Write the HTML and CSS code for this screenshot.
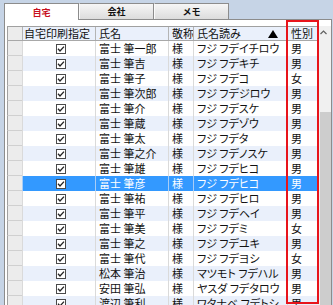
FILE: index.html
```html
<!DOCTYPE html>
<html lang="ja">
<head>
  <meta charset="UTF-8" />
  <title>宛名一覧</title>
  <link rel="stylesheet" href="styles.css">
</head>
<body>
  <svg class="defs" width="0" height="0">
    <symbol id="chk" viewBox="0 0 10 10">
      <rect x="0.5" y="0.5" width="9" height="9" fill="#fff" stroke="#4a4a4a" />
      <polyline points="2,4.8 4,7 8,2.6" fill="none" stroke="#222" stroke-width="1.3" />
    </symbol>
  </svg>

  <div class="tabs">
    <div class="tab active">自宅</div>
    <div class="tab">会社</div>
    <div class="tab">メモ</div>
  </div>

  <div class="panel">
    <div class="grid-wrap">
      <div class="grid">
        <div class="row head">
          <div class="rh"></div>
          <div class="cell first">自宅印刷指定</div>
          <div class="cell">氏名</div>
          <div class="cell">敬称</div>
          <div class="cell sort">氏名読み
            <svg width="10" height="8" viewBox="0 0 10 8"><polygon points="5,0 10,8 0,8" fill="#000" /></svg>
          </div>
          <div class="cell">性別</div>
        </div>

        <div class="row"><div class="rh"></div><div class="cell check"><svg><use href="#chk" /></svg></div><div class="cell">富士 筆一郎</div><div class="cell">様</div><div class="cell kana">フジ フデイチロウ</div><div class="cell">男</div></div>
        <div class="row"><div class="rh"></div><div class="cell check"><svg><use href="#chk" /></svg></div><div class="cell">富士 筆吉</div><div class="cell">様</div><div class="cell kana">フジ フデキチ</div><div class="cell">男</div></div>
        <div class="row"><div class="rh"></div><div class="cell check"><svg><use href="#chk" /></svg></div><div class="cell">富士 筆子</div><div class="cell">様</div><div class="cell kana">フジ フデコ</div><div class="cell">女</div></div>
        <div class="row"><div class="rh"></div><div class="cell check"><svg><use href="#chk" /></svg></div><div class="cell">富士 筆次郎</div><div class="cell">様</div><div class="cell kana">フジ フデジロウ</div><div class="cell">男</div></div>
        <div class="row"><div class="rh"></div><div class="cell check"><svg><use href="#chk" /></svg></div><div class="cell">富士 筆介</div><div class="cell">様</div><div class="cell kana">フジ フデスケ</div><div class="cell">男</div></div>
        <div class="row"><div class="rh"></div><div class="cell check"><svg><use href="#chk" /></svg></div><div class="cell">富士 筆蔵</div><div class="cell">様</div><div class="cell kana">フジ フデゾウ</div><div class="cell">男</div></div>
        <div class="row"><div class="rh"></div><div class="cell check"><svg><use href="#chk" /></svg></div><div class="cell">富士 筆太</div><div class="cell">様</div><div class="cell kana">フジ フデタ</div><div class="cell">男</div></div>
        <div class="row"><div class="rh"></div><div class="cell check"><svg><use href="#chk" /></svg></div><div class="cell">富士 筆之介</div><div class="cell">様</div><div class="cell kana">フジ フデノスケ</div><div class="cell">男</div></div>
        <div class="row"><div class="rh"></div><div class="cell check"><svg><use href="#chk" /></svg></div><div class="cell">富士 筆雄</div><div class="cell">様</div><div class="cell kana">フジ フデヒコ</div><div class="cell">男</div></div>
        <div class="row sel"><div class="rh"></div><div class="cell check"><svg><use href="#chk" /></svg></div><div class="cell">富士 筆彦</div><div class="cell">様</div><div class="cell kana">フジ フデヒコ</div><div class="cell">男</div></div>
        <div class="row"><div class="rh"></div><div class="cell check"><svg><use href="#chk" /></svg></div><div class="cell">富士 筆祐</div><div class="cell">様</div><div class="cell kana">フジ フデヒロ</div><div class="cell">男</div></div>
        <div class="row"><div class="rh"></div><div class="cell check"><svg><use href="#chk" /></svg></div><div class="cell">富士 筆平</div><div class="cell">様</div><div class="cell kana">フジ フデヘイ</div><div class="cell">男</div></div>
        <div class="row"><div class="rh"></div><div class="cell check"><svg><use href="#chk" /></svg></div><div class="cell">富士 筆美</div><div class="cell">様</div><div class="cell kana">フジ フデミ</div><div class="cell">女</div></div>
        <div class="row"><div class="rh"></div><div class="cell check"><svg><use href="#chk" /></svg></div><div class="cell">富士 筆之</div><div class="cell">様</div><div class="cell kana">フジ フデユキ</div><div class="cell">男</div></div>
        <div class="row"><div class="rh"></div><div class="cell check"><svg><use href="#chk" /></svg></div><div class="cell">富士 筆代</div><div class="cell">様</div><div class="cell kana">フジ フデヨシ</div><div class="cell">女</div></div>
        <div class="row"><div class="rh"></div><div class="cell check"><svg><use href="#chk" /></svg></div><div class="cell">松本 筆治</div><div class="cell">様</div><div class="cell kana">マツモト フデハル</div><div class="cell">男</div></div>
        <div class="row"><div class="rh"></div><div class="cell check"><svg><use href="#chk" /></svg></div><div class="cell">安田 筆弘</div><div class="cell">様</div><div class="cell kana">ヤスダ フデタロウ</div><div class="cell">男</div></div>
        <div class="row"><div class="rh"></div><div class="cell check"><svg><use href="#chk" /></svg></div><div class="cell">渡辺 筆利</div><div class="cell">様</div><div class="cell kana">ワタナベ フデトシ</div><div class="cell">男</div></div>
      </div>

      <div class="vscroll">
        <div class="arrow">
          <svg width="7" height="5" viewBox="0 0 7 5"><polyline points="0.5,4 3.5,1 6.5,4" fill="none" stroke="#606060" stroke-width="1.2" /></svg>
        </div>
        <div class="thumb"></div>
      </div>
    </div>

    <div class="mark"></div>
  </div>
</body>
</html>
```

FILE: styles.css
```css
body {
  margin: 0;
  height: 305px;
  overflow: hidden;
  background: #c6d4e6;
  font-family: "Noto Sans CJK JP", sans-serif;
  font-size: 11px;
  color: #111;
}

.defs {
  position: absolute;
}

.tabs {
  display: flex;
  height: 16px;
  padding: 3px 0 0 4px;
}

.tab {
  width: 75px;
  height: 16px;
  box-sizing: border-box;
  display: flex;
  align-items: center;
  justify-content: center;
  font-size: 9px;
  font-weight: bold;
  background: linear-gradient(#f6f6f6, #dcdcdc);
  border: 1px solid #8c8c8c;
  border-bottom: none;
  border-left-color: #fafafa;
}

.tab.active {
  position: relative;
  z-index: 1;
  height: 17px;
  background: #fff;
  color: #c8101e;
  border-left-color: #8c8c8c;
}

.panel {
  position: relative;
  margin-left: 4px;
  width: 328px;
  height: 286px;
  box-sizing: border-box;
  padding: 6px 0 0 2px;
  background: #fff;
  border: 1px solid #8c8c8c;
  border-bottom: none;
}

.grid-wrap {
  display: flex;
}

.grid {
  border-top: 1px solid #a0a0a0;
}

.row {
  display: grid;
  grid-template-columns: 15px 73px 73px 25px 94px 31px;
  height: 15px;
  box-sizing: border-box;
}

.row:nth-child(odd) .cell {
  background: #eaf0fb;
}

.cell {
  box-sizing: border-box;
  border-left: 1px solid #dadada;
  padding-left: 3px;
  line-height: 15px;
  white-space: nowrap;
}

.kana {
  font-feature-settings: "palt";
}

.rh {
  box-sizing: border-box;
  background: #ececec;
  border-left: 1px solid #a0a0a0;
  border-bottom: 1px solid #d0d0d0;
}

.head {
  height: 14px;
  border-bottom: 1px solid #a8a8a8;
}

.head .cell {
  background: #fbfbfb;
  border-left-color: #b4b4b4;
  line-height: 13px;
}

.head .rh {
  border-bottom: none;
}

.head .first {
  padding-left: 1px;
}

.sort {
  display: flex;
  align-items: center;
  justify-content: space-between;
  padding-right: 9px;
}

.check {
  display: flex;
  align-items: center;
  justify-content: center;
}

.check svg {
  width: 10px;
  height: 10px;
}

.row.sel .cell {
  background: #3399ff;
  color: #fff;
  border-left-color: #a8cdf6;
}

.vscroll {
  width: 13px;
  height: 280px;
  background: #f0f0f0;
  display: flex;
  flex-direction: column;
}

.arrow {
  height: 86px;
  padding: 4px 0 0 2px;
  box-sizing: border-box;
}

.arrow svg {
  display: block;
}

.thumb {
  flex: 1;
  margin-left: 2px;
  background: #cdcdcd;
}

.mark {
  position: absolute;
  left: 281px;
  top: 0;
  width: 33px;
  height: 284px;
  box-sizing: border-box;
  border: 2px solid #e8141b;
}
```
